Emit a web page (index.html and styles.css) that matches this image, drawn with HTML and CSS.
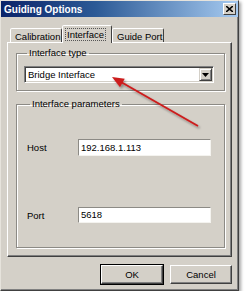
FILE: index.html
```html
<!DOCTYPE html>
<html lang="en">
  <head>
    <meta charset="UTF-8" />
    <title>Guiding Options</title>
    <link rel="stylesheet" href="styles.css">
  </head>
  <body>
    <div class="window">
      <div class="titlebar">
        <span class="title">Guiding Options</span>
        <span class="close">
          <svg width="7" height="6" viewBox="0 0 7 6">
            <path d="M0 0 L7 6 M7 0 L0 6" stroke="#000" stroke-width="1.6" />
          </svg>
        </span>
      </div>

      <div class="content">
        <div class="tabs">
          <div class="tab">Calibration</div>
          <div class="tab active"><span class="focus">Interface</span></div>
          <div class="tab">Guide Port</div>
        </div>

        <div class="panel">
          <fieldset class="group">
            <legend>Interface type</legend>
            <div class="combo">
              <span class="combo-text">Bridge Interface</span>
              <span class="combo-btn">
                <svg width="7" height="4" viewBox="0 0 7 4"><path d="M0 0 H7 L3.5 4 Z" fill="#000" /></svg>
              </span>
            </div>
          </fieldset>

          <fieldset class="group params">
            <legend>Interface parameters</legend>
            <div class="row">
              <label>Host</label>
              <div class="field">192.168.1.113</div>
            </div>
            <div class="row port">
              <label>Port</label>
              <div class="field short">5618</div>
            </div>
          </fieldset>
        </div>

        <div class="buttons">
          <button class="btn ok">OK</button>
          <button class="btn">Cancel</button>
        </div>
      </div>

      <!-- red annotation arrow drawn over the dialog -->
      <svg class="arrow" width="239" height="291" viewBox="0 0 239 291">
        <defs>
          <filter id="shadow" x="-20%" y="-20%" width="140%" height="140%">
            <feDropShadow dx="1.5" dy="2" stdDeviation="1" flood-color="#000" flood-opacity="0.35" />
          </filter>
        </defs>
        <g filter="url(#shadow)">
          <line x1="198" y1="126" x2="121" y2="82" stroke="#cc1d1d" stroke-width="2" />
          <path d="M112 77 L124.8 78.8 L120 87.2 Z" fill="#cc1d1d" />
        </g>
      </svg>
    </div>
  </body>
</html>
```

FILE: styles.css
```css
body {
  margin: 0;
  background: #fff;
  font-family: "Liberation Sans", Arial, sans-serif;
  font-size: 9.5px;
  color: #000;
}

.window {
  position: relative;
  width: 239px;
  height: 291px;
  box-sizing: border-box;
  background: #d4d0c8;
  border: 1px solid;
  border-color: #e6e3dc #404040 #404040 #e6e3dc;
  box-shadow: inset -1px -1px #808080, 2px 2px 3px rgba(0, 0, 0, 0.35);
}

.titlebar {
  height: 16px;
  display: flex;
  align-items: center;
  justify-content: space-between;
  padding: 0 2px 0 3px;
  background: linear-gradient(to right, #0a246a, #2c5a96 40%, #a6caf0);
}

.title {
  color: #fff;
  font-weight: bold;
  font-size: 10px;
}

.close {
  width: 13px;
  height: 12px;
  box-sizing: border-box;
  display: flex;
  align-items: center;
  justify-content: center;
  background: #d4d0c8;
  border: 1px solid;
  border-color: #fff #404040 #404040 #fff;
}

.content {
  padding: 8px 6px 0 6px;
}

.tabs {
  display: flex;
  align-items: flex-end;
  height: 17px;
  padding-left: 3px;
  position: relative;
  z-index: 1;
}

.tab {
  height: 14px;
  box-sizing: border-box;
  padding: 2px 0 0 4px;
  white-space: nowrap;
  border: 1px solid;
  border-bottom: none;
  border-color: #fff #404040 transparent #fff;
  border-radius: 2px 2px 0 0;
  background: #d4d0c8;
  width: 52px;
}

.tab.active {
  height: 18px;
  margin-bottom: -1px;
  width: 50px;
  padding: 3px 0 0 3px;
}

.focus {
  display: inline-block;
  padding: 0 1px;
  outline: 1px dotted #555;
}

.panel {
  height: 215px;
  box-sizing: border-box;
  border: 1px solid;
  border-color: #fff #404040 #404040 #fff;
  box-shadow: inset -1px -1px #808080;
  padding: 4px 6px 0 8px;
}

.group {
  margin: 0;
  padding: 7px 10px 7px 7px;
  min-width: 0;
  border: 1px solid #8c8a85;
  box-shadow: inset 1px 1px #fff, 1px 1px #fff;
}

.group legend {
  padding: 0 2px;
  margin-left: 3px;
  line-height: 12px;
}

.combo {
  height: 17px;
  box-sizing: border-box;
  display: flex;
  align-items: center;
  background: #fff;
  border: 1px solid;
  border-color: #808080 #fff #fff #808080;
  box-shadow: inset 1px 1px #404040, inset -1px -1px #d4d0c8;
  padding: 0 1px 0 3px;
}

.combo-text {
  flex: 1;
}

.combo-btn {
  width: 13px;
  height: 13px;
  box-sizing: border-box;
  display: flex;
  align-items: center;
  justify-content: center;
  background: #d4d0c8;
  border: 1px solid;
  border-color: #d4d0c8 #404040 #404040 #d4d0c8;
  box-shadow: inset 1px 1px #fff, inset -1px -1px #808080;
}

.params {
  margin-top: 7px;
  padding: 29px 13px 24px 10px;
}

.row {
  display: flex;
  align-items: center;
}

.row.port {
  margin-top: 51px;
}

.row label {
  width: 51px;
}

.field {
  flex: 1;
  height: 17px;
  box-sizing: border-box;
  line-height: 15px;
  padding-left: 2px;
  background: #fff;
  border: 1px solid;
  border-color: #8c8a85 #f4f3ef #f4f3ef #8c8a85;
}

.field.short {
  height: 16px;
  line-height: 14px;
}

.buttons {
  display: flex;
  justify-content: flex-end;
  gap: 7px;
  margin-top: 8px;
}

.btn {
  width: 62px;
  height: 19px;
  margin: 0;
  padding: 0;
  font-family: inherit;
  font-size: 9.5px;
  color: #000;
  background: #d4d0c8;
  border: 1px solid;
  border-color: #fff #404040 #404040 #fff;
  box-shadow: inset -1px -1px #808080;
}

.btn.ok {
  outline: 1px solid #000;
  outline-offset: 0;
}

.arrow {
  position: absolute;
  left: -1px;
  top: -1px;
  pointer-events: none;
}
```
